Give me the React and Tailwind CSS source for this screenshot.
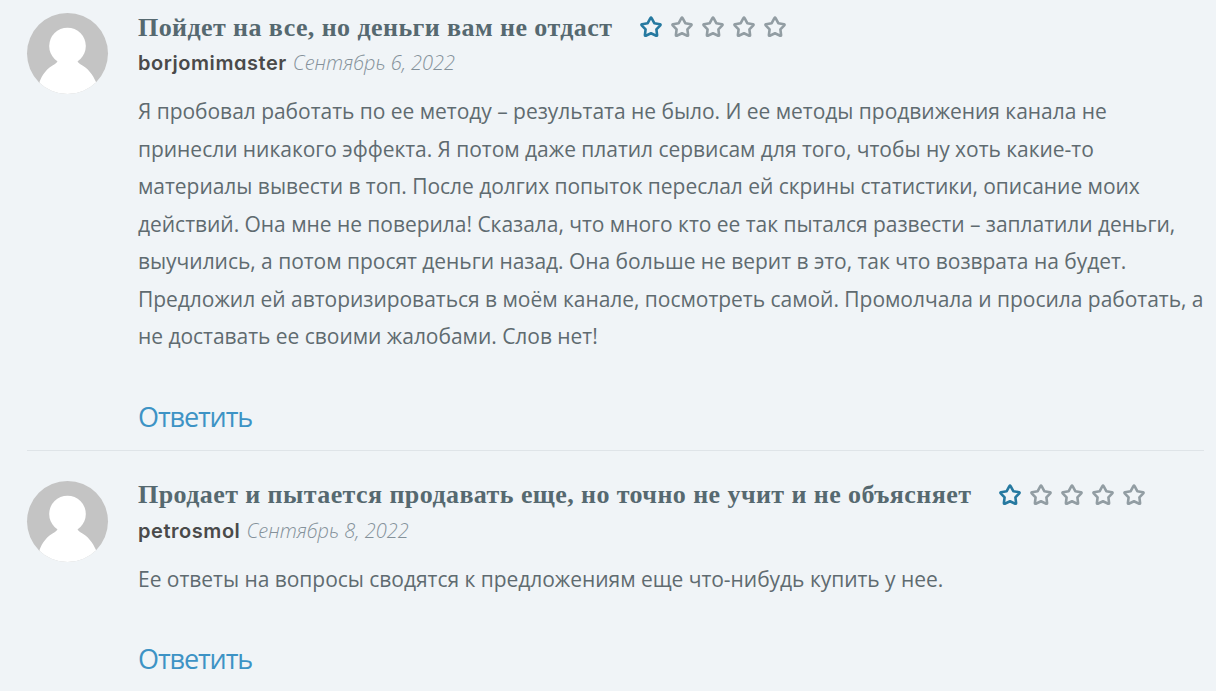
const reviews = [
  {
    id: 1,
    title: "Пойдет на все, но деньги вам не отдаст",
    author: "borjomimaster",
    date: "Сентябрь 6, 2022",
    rating: 1,
    lines: [
      "Я пробовал работать по ее методу – результата не было. И ее методы продвижения канала не",
      "принесли никакого эффекта. Я потом даже платил сервисам для того, чтобы ну хоть какие-то",
      "материалы вывести в топ. После долгих попыток переслал ей скрины статистики, описание моих",
      "действий. Она мне не поверила! Сказала, что много кто ее так пытался развести – заплатили деньги,",
      "выучились, а потом просят деньги назад. Она больше не верит в это, так что возврата на будет.",
      "Предложил ей авторизироваться в моём канале, посмотреть самой. Промолчала и просила работать, а",
      "не доставать ее своими жалобами. Слов нет!",
    ],
  },
  {
    id: 2,
    title: "Продает и пытается продавать еще, но точно не учит и не объясняет",
    author: "petrosmol",
    date: "Сентябрь 8, 2022",
    rating: 1,
    lines: ["Ее ответы на вопросы сводятся к предложениям еще что-нибудь купить у нее."],
  },
];

function Avatar() {
  return (
    <svg viewBox="0 0 81 81" className="size-[81px] shrink-0 rounded-full bg-[#c4c4c4]">
      <circle cx="40.5" cy="33" r="18.3" fill="#fff" />
      <path d="M31 46 Q31 49 28 51 C20 55 15 62 12.5 69 V81 H69 V69 C66 62 61 55 53 51 Q50 49 50 46 Z" fill="#fff" />
    </svg>
  );
}

function Star({ active }) {
  return (
    <svg
      viewBox="0 0 24 24"
      fill="none"
      stroke="currentColor"
      strokeWidth="2.6"
      strokeLinejoin="round"
      className={active ? "size-6 text-[#2679a0]" : "size-6 text-[#929da3]"}
    >
      <path d="M11.4 3.1 Q12 2.2 12.6 3.1 L15.3 8.2 L21 9.2 Q22 9.6 21.3 10.3 L17.4 14.4 L18.1 20 Q18 21 17.2 20.7 L12 18.3 L6.8 20.7 Q6 21 5.9 20 L6.6 14.4 L2.7 10.3 Q2 9.6 3 9.2 L8.7 8.2 Z" />
    </svg>
  );
}

function Review({ review }) {
  return (
    <article className="flex gap-[30px]">
      <Avatar />
      <div className="whitespace-nowrap">
        <div className="flex h-7 items-center gap-[26.5px]">
          <h2 className="font-['Liberation_Serif',serif] text-[26px] font-bold tracking-[0.42px] text-[#566970]">
            {review.title}
          </h2>
          <div className="flex gap-[7.1px]">
            {[1, 2, 3, 4, 5].map((n) => (
              <Star key={n} active={n <= review.rating} />
            ))}
          </div>
        </div>
        <div className="mt-0.5 flex h-10 items-center gap-[6px] text-xl">
          <span className="font-['Inter',sans-serif] font-semibold tracking-[0.55px] text-[#4a4a4a] [font-feature-settings:'cv11']">
            {review.author}
          </span>
          <span className="font-light text-[#84919a] italic">{review.date}</span>
        </div>
        <p className="mt-[10px] text-[21px] leading-[37.5px] tracking-[-0.035px] text-[#5f6b70]">
          {review.lines.map((line) => (
            <span key={line} className="block">{line}</span>
          ))}
        </p>
        <a href="#" className="mt-[42px] mb-px block text-[27px] leading-[37px] tracking-[-1.1px] text-[#3d93c5]">
          Ответить
        </a>
      </div>
    </article>
  );
}

function App() {
  return (
    <main className="h-[691px] overflow-hidden bg-[#f0f4f7] pt-[13px] pr-3 pl-[27px] font-['Open_Sans',sans-serif]">
      <Review review={reviews[0]} />
      <hr className="mt-[14px] mb-[30px] border-[#dfe4e8]" />
      <Review review={reviews[1]} />
    </main>
  );
}

export default App;
